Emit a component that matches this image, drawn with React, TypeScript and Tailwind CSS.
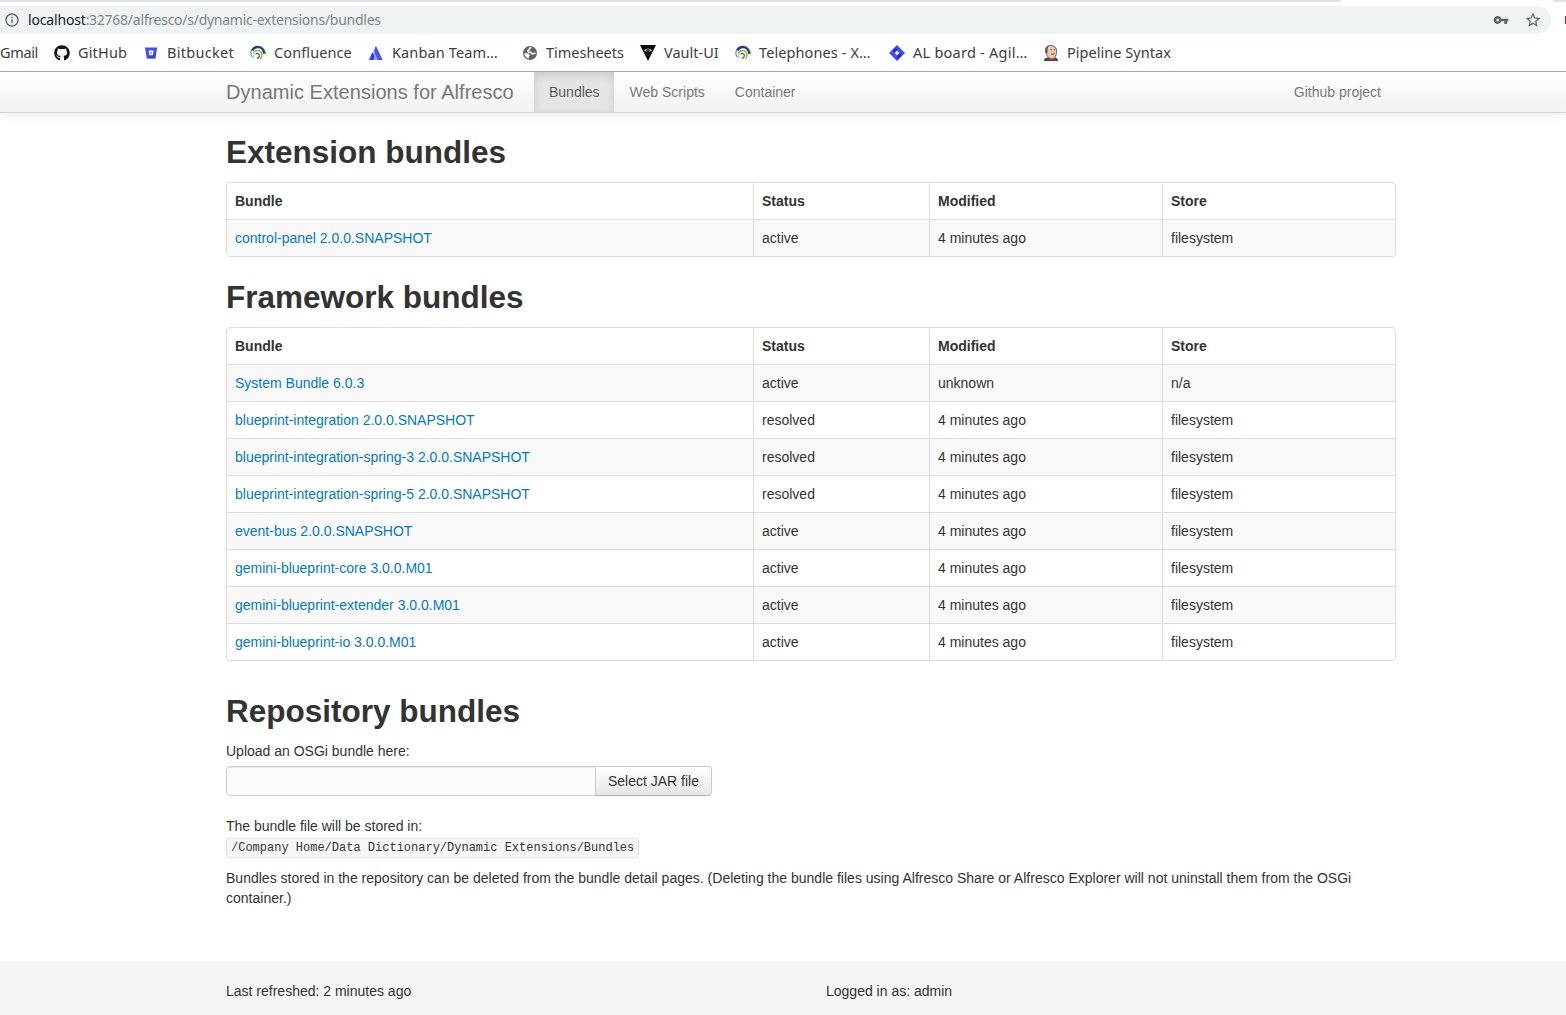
import React from "react";
import { MdVpnKey, MdStarBorder, MdInfoOutline } from "react-icons/md";
import { FaGithub } from "react-icons/fa";

const BitbucketIcon = () => (
  <svg viewBox="0 0 16 16" className="size-4">
    <path d="M2 2.5h12.2L12.4 13.6H3.8z" fill="#3d50f5" />
    <path d="M12.9 7.5 12.4 13.6H3.8L8 10z" fill="#2d35d8" opacity=".6" />
    <path d="M5.6 5.6h5l-.7 4.6H6.3z" fill="#fff" />
    <path d="M7.300 7.300h1.500l-.2 1.400H7.500z" fill="#3d50f5" />
  </svg>
);

const ConfluenceIcon = () => (
  <svg viewBox="0 0 16 16" className="size-4" fill="none">
    <path d="M2.200 12.200C-.6 7.500 1.500 3.500 4.500 2.200" stroke="#5aa5cf" strokeWidth="1.300" />
    <path d="M2.300 5.600C5 .2 13.200.6 14.500 8.800" stroke="#23397a" strokeWidth="2.300" />
    <path d="M15.300 8.800C15 5 13 2.300 10 1.300" stroke="#2d7fb8" strokeWidth=".9" />
    <path d="M3.200 8.700c1.400-4.300 8-4.200 8.700.4.300 2-.4 3.700-1.700 4.700" stroke="#a9b52c" strokeWidth="1.500" />
    <path d="M5.500 9.600c.9-1.700 3.800-1.300 3.900.9 0 1.500-1 2.600-2.500 3" stroke="#35607d" strokeWidth="1.100" />
    <path d="M3.400 9.800c-.2 1.500.1 2.600.8 3.600" stroke="#8fc0d8" strokeWidth="1" />
  </svg>
);

const AtlassianIcon = () => (
  <svg viewBox="0 0 16 16" className="size-4">
    <path d="M8 1 14.700 15H9.900L6.300 6.800C6.500 4.500 7 2.500 8 1z" fill="#4653ff" />
    <path d="M8 1 10.500 15H6L5.300 7z" fill="#4653ff" opacity=".55" />
    <path d="M4.300 7.200c1.900 2 2.300 4.800 1.300 7.800H1z" fill="#2a31e8" />
    <path d="M3.600 9c1 2.500.2 4.500-1 6H1z" fill="#4653ff" />
  </svg>
);

const GlobeIcon = () => (
  <svg viewBox="0 0 16 16" className="size-4">
    <circle cx="8" cy="8" r="7" fill="#5f6368" />
    <path
      d="M9.300 2.600C7.800 2.700 7.200 3.500 7.400 4.600L5.800 5.700c0 1.400 1 1.700 3 1.600.6 1.400 1.500 1.800 2.700 1.500l2-.9"
      fill="none"
      stroke="#fff"
      strokeWidth="1.500"
    />
    <path d="M2.300 8.200h2.800c1.800 0 2.900 1 2.900 2.300l-1 .6v2.300C4.300 13.100 2.400 11 2.300 8.200z" fill="#fff" />
  </svg>
);

const VaultIcon = () => (
  <svg viewBox="0 0 16 16" className="size-4">
    <path d="M0 0h16L8 16z" fill="#0b0b0b" />
    <path d="M3.800 5.200Q8 2 12.200 5.200 8 8.400 3.800 5.200z" fill="#c9c9c9" />
    <circle cx="8" cy="5.200" r="1.700" fill="#111" />
    <circle cx="8" cy="4.900" r=".6" fill="#fff" />
  </svg>
);

const JiraIcon = () => (
  <svg viewBox="0 0 16 16" className="size-4">
    <path d="M8 0 16 8 8 16 0 8z" fill="#4150fb" />
    <path d="M8 1v4L5 8 3.500 5.500zM8 15v-4l3-3 1.500 2.500z" fill="#2521cf" opacity=".8" />
    <path d="M8 5.800 10.200 8 8 10.200 5.800 8z" fill="#fff" />
  </svg>
);

const JenkinsIcon = () => (
  <svg viewBox="0 0 16 16" className="size-4">
    <path d="M1 16c0-2.300 1.200-3.300 4-3.600l7 .2c2 .4 3 1.400 3 3.400z" fill="#2f4a63" />
    <path d="M2.600 5C2.600 1.800 5 .5 8 .5s5.600 2 5.600 5.500-1.200 7.700-4.600 8.200C5.500 14 2.800 9.500 2.600 5z" fill="#eacbab" stroke="#4b4038" strokeWidth=".8" />
    <path d="M2.200 7C1.600 3.300 3.300.9 6.300.5 4.300 2.500 4.500 5 4.700 7.500L3.500 8.700z" fill="#685e55" />
    <path d="M7.300 4.900h2M10.800 4.900h1.500M8 9.200l3.700-.4" stroke="#574238" strokeWidth=".8" />
    <path d="m6.500 12.800 2.700 1 3-1v3l-3-1-2.700 1z" fill="#d52a2f" />
  </svg>
);

const bookmarks = [
  { label: "GitHub", icon: <FaGithub className="size-4 text-[#161616]" />, text: "w-[49px] tracking-[0.15px]" },
  { label: "Bitbucket", icon: <BitbucketIcon />, text: "w-[67px] tracking-[0.3px]" },
  { label: "Confluence", icon: <ConfluenceIcon />, text: "w-[78px] tracking-[0.1px]" },
  { label: "Kanban Team…", icon: <AtlassianIcon />, text: "w-[114px] tracking-[0.13px]" },
  { label: "Timesheets", icon: <GlobeIcon />, text: "w-[78px] tracking-[0px]" },
  { label: "Vault-UI", icon: <VaultIcon />, text: "w-[55px] tracking-[0px]" },
  { label: "Telephones - X…", icon: <ConfluenceIcon />, text: "w-[114px] tracking-[0.1px]" },
  { label: "AL board - Agil…", icon: <JiraIcon />, text: "w-[114px] tracking-[0.25px]" },
  { label: "Pipeline Syntax", icon: <JenkinsIcon />, text: "w-[110px] tracking-[0.04px]" },
];

function BrowserBar() {
  return (
    <div className="relative z-10 h-[72px] overflow-hidden border-b border-[#a9a9a9] bg-white font-['Noto_Sans',sans-serif]">
      <div className="flex h-[2px] justify-between">
        <div className="w-[1341px] rounded-br-[3px] bg-[#dee1e6]" />
        <div className="w-[13px] rounded-bl-[3px] bg-[#dee1e6]" />
      </div>
      <div className="mt-1 flex h-7 items-center justify-between">
        <div className="-ml-[14px] flex h-7 w-[1565px] items-center rounded-full bg-[#eff3f4] pl-[18px] pr-[9px]">
          <MdInfoOutline className="size-4 text-[#5f6368]" />
          <div className="ml-2 w-[360px] flex-none whitespace-nowrap text-[14px] leading-7 tracking-[-0.26px] text-[#80868b]">
            <span className="tracking-[-0.17px] text-[#202124]">localhost</span>:32768/alfresco/s/dynamic-extensions/bundles
          </div>
          <MdVpnKey className="ml-auto size-4 text-[#5f6368]" />
          <MdStarBorder className="ml-[15px] size-[18px] text-[#5f6368]" />
        </div>
        <div className="h-2 w-px bg-[#c4161c]" />
      </div>
      <div className="flex h-[37px] items-center gap-4 whitespace-nowrap text-[14.5px] text-[#3c4043]">
        <span className="w-[38px] flex-none pb-[2px] leading-5 tracking-[-0.35px]">Gmail</span>
        {bookmarks.map((b) => (
          <div key={b.label} className="flex flex-none items-center gap-2">
            {b.icon}
            <span className={"pb-[2px] leading-5 " + b.text}>{b.label}</span>
          </div>
        ))}
      </div>
    </div>
  );
}

function NavBar() {
  return (
    <nav className="h-[41px] border-b border-[#d4d4d4] bg-linear-to-b from-white to-[#f2f2f2] shadow-[0_1px_10px_rgba(0,0,0,0.1)]">
      <div className="ml-[226px] flex h-10 w-[1170px] text-[#777] [text-shadow:0_1px_0_#fff]">
        <span className="w-[308px] text-xl leading-10 tracking-[0.03px]">Dynamic Extensions for Alfresco</span>
        <a className="w-20 bg-[#e5e5e5] pl-[15px] leading-10 text-[#555] shadow-[inset_0_3px_8px_rgba(0,0,0,0.125)]">Bundles</a>
        <a className="pl-[15.6px] pr-[15px] leading-10">Web Scripts</a>
        <a className="px-[15px] leading-10">Container</a>
        <a className="ml-auto px-[15px] leading-10">Github project</a>
      </div>
    </nav>
  );
}

const filesystemRow = (name: string, status: string) => [name, status, "4 minutes ago", "filesystem"];

const extensionRows = [filesystemRow("control-panel 2.0.0.SNAPSHOT", "active")];

const frameworkRows = [
  ["System Bundle 6.0.3", "active", "unknown", "n/a"],
  filesystemRow("blueprint-integration 2.0.0.SNAPSHOT", "resolved"),
  filesystemRow("blueprint-integration-spring-3 2.0.0.SNAPSHOT", "resolved"),
  filesystemRow("blueprint-integration-spring-5 2.0.0.SNAPSHOT", "resolved"),
  filesystemRow("event-bus 2.0.0.SNAPSHOT", "active"),
  filesystemRow("gemini-blueprint-core 3.0.0.M01", "active"),
  filesystemRow("gemini-blueprint-extender 3.0.0.M01", "active"),
  filesystemRow("gemini-blueprint-io 3.0.0.M01", "active"),
];

function BundleTable({ rows }: { rows: string[][] }) {
  return (
    <div className="mt-[10px] overflow-hidden rounded border border-[#ddd]">
      <div className="grid grid-cols-[526px_176px_233px_233px] font-bold">
        {["Bundle", "Status", "Modified", "Store"].map((h) => (
          <div key={h} className="border-l border-[#ddd] p-2 first:border-l-0">{h}</div>
        ))}
      </div>
      {rows.map((row) => (
        <div key={row[0]} className="grid grid-cols-[526px_176px_233px_233px] border-t border-[#ddd] even:bg-[#f9f9f9]">
          {row.map((cell, i) => (
            <div key={i} className="border-l border-[#ddd] p-2 first:border-l-0 first:text-[#007acc]">{cell}</div>
          ))}
        </div>
      ))}
    </div>
  );
}

const Heading = ({ children }: { children: React.ReactNode }) => (
  <h2 className="text-[31.5px] font-bold leading-10">{children}</h2>
);

export default function App() {
  return (
    <div className="flex h-[1015px] w-[1566px] flex-col overflow-hidden bg-white font-['Liberation_Sans',Arial,sans-serif] text-sm leading-5 text-[#333]">
      <BrowserBar />
      <NavBar />
      <main className="ml-[226px] mt-[19px] w-[1170px]">
        <Heading>Extension bundles</Heading>
        <BundleTable rows={extensionRows} />
        <div className="mt-5">
          <Heading>Framework bundles</Heading>
          <BundleTable rows={frameworkRows} />
        </div>
        <div className="mt-[30px]">
          <Heading>Repository bundles</Heading>
          <p className="mt-[10px]">Upload an OSGi bundle here:</p>
          <div className="mt-[5px] flex h-[30px]">
            <div className="w-[370px] rounded-l border border-[#ccc] bg-[#fcfcfc] shadow-[inset_0_1px_1px_rgba(0,0,0,0.075)]" />
            <button className="-ml-px w-[117px] rounded-r border border-[#ccc] border-b-[#b3b3b3] bg-linear-to-b from-white to-[#e6e6e6] text-center shadow-[inset_0_1px_0_rgba(255,255,255,0.2),0_1px_2px_rgba(0,0,0,0.05)] [text-shadow:0_1px_1px_rgba(255,255,255,0.75)]">
              Select JAR file
            </button>
          </div>
          <p className="mt-5">The bundle file will be stored in:</p>
          <div className="mt-[2px] flex">
            <code className="h-5 whitespace-pre rounded-[3px] border border-[#e1e1e8] bg-[#f7f7f9] px-1 font-['Liberation_Mono',monospace] text-xs leading-[18px]">/Company Home/Data Dictionary/Dynamic Extensions/Bundles</code>
          </div>
          <p className="mt-[10px] tracking-[0.008px]">
            Bundles stored in the repository can be deleted from the bundle detail pages. (Deleting the bundle files using Alfresco Share or Alfresco Explorer will not uninstall them from the OSGi container.)
          </p>
        </div>
      </main>
      <footer className="mt-[53px] flex h-[54px] flex-none bg-[#f5f5f5] pl-[226px] pt-5">
        <span className="w-[600px]">Last refreshed: 2 minutes ago</span>
        <span>Logged in as: admin</span>
      </footer>
    </div>
  );
}
